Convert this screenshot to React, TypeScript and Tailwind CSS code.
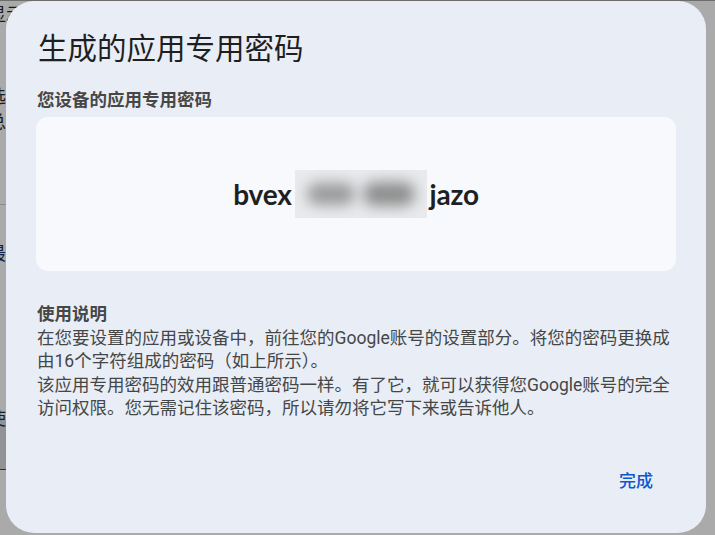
import React from 'react';

const cjk = { fontFamily: 'Roboto, "Noto Sans CJK SC", sans-serif' };

// faded page behind the scrim, only the edges peek out
const BackPage = () => (
  <div className="relative h-[535px] w-[715px] overflow-hidden bg-[#aaaaaa]" style={cjk}>
    <div className="h-px w-full bg-[#6d6d6d]" />
    <div className="ml-[-12px] flex flex-col text-[18px] text-[#1c1c1c]">
      <span className="mt-[3px] leading-[22px]">显示</span>
      <span className="mt-[60px] leading-[22px]">选推</span>
      <span className="mt-[4px] leading-[22px]">总之</span>
    </div>
    <div className="mt-[70px] h-px w-[12px] bg-[#8a8a8a]" />
    <div className="ml-[-12px] mt-[38px] text-[18px] leading-[22px] text-[#0f1e3a]">最初</div>
    <div className="ml-[-12px] mt-[143px] text-[18px] leading-[22px] text-[#1c1c1c]">使用</div>
    <div className="mt-[-10px] h-[50px] w-[12px] border-b border-[#333] bg-[#919396]" />
  </div>
);

export default function App() {
  return (
    <div className="relative">
      <BackPage />
      <div
        className="fixed left-[6px] top-[1px] flex h-[532px] w-[700px] flex-col rounded-[28px] bg-[#e9edf6] px-[30px] pt-[29px]"
        style={cjk}
      >
        <h2 className="pl-[2px] text-[29.5px] leading-[38px] text-[#1f1f1f]">生成的应用专用密码</h2>
        <div className="mt-[20px] pl-[1px] text-[17.5px] font-bold leading-[24px] text-[#474747]">您设备的应用专用密码</div>
        <div className="mt-[5px] flex h-[154px] items-center justify-center rounded-[12px] bg-[#f7f9fd]">
          <div
            className="flex items-center text-[28px] font-bold tracking-[-0.2px] text-[#1f1f1f]"
            style={{ fontFamily: 'Lato, "Open Sans", sans-serif' }}
          >
            <span>bvex</span>
            {/* redacted middle part */}
            <span className="mx-[3px] flex h-[48px] w-[132px] items-center justify-around overflow-hidden bg-[#e8eaed] px-[8px]">
              <span className="h-[22px] w-[48px] rounded-full bg-[#9a9a9a] blur-[7px]" />
              <span className="h-[24px] w-[52px] rounded-full bg-[#8e8e8e] blur-[7px]" />
            </span>
            <span>jazo</span>
          </div>
        </div>
        <div className="mt-[32px] pl-[1px] text-[17.5px] leading-[23.5px] text-[#444746]">
          <div className="font-bold text-[#474747]">使用说明</div>
          <p>在您要设置的应用或设备中，前往您的Google账号的设置部分。将您的密码更换成由16个字符组成的密码（如上所示）。</p>
          <p>该应用专用密码的效用跟普通密码一样。有了它，就可以获得您Google账号的完全访问权限。您无需记住该密码，所以请勿将它写下来或告诉他人。</p>
        </div>
        <div className="mt-auto flex justify-end pb-[40px] pr-[23px]">
          <button className="text-[17px] font-medium leading-[24px] text-[#0b57d0]">完成</button>
        </div>
      </div>
    </div>
  );
}
